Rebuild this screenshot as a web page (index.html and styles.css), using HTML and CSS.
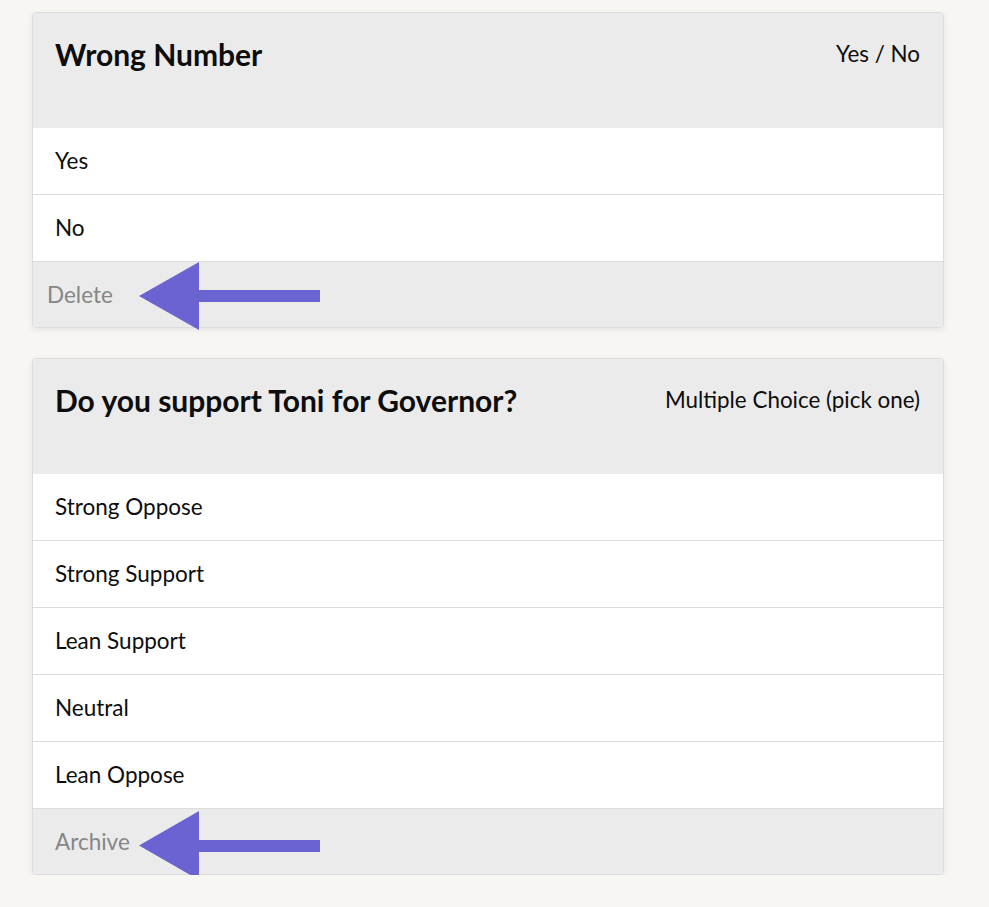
FILE: index.html
```html
<!DOCTYPE html>
<html lang="en">
<head>
<meta charset="utf-8">
<title>Questions</title>
<link rel="stylesheet" href="styles.css">
</head>
<body>
<main class="page">
  <section class="card">
    <header class="card-head">
      <h2 class="card-title">Wrong Number</h2>
      <span class="card-type">Yes / No</span>
    </header>
    <div class="row">Yes</div>
    <div class="row">No</div>
    <footer class="card-foot foot-delete">
      <span class="foot-action">Delete</span>
      <svg class="arrow arrow-1" width="181" height="68" viewBox="0 0 181 68"><polygon points="0,34 60,0 60,28 181,28 181,40 60,40 60,68" fill="#6b63d2"/></svg>
    </footer>
  </section>
  <section class="card">
    <header class="card-head">
      <h2 class="card-title">Do you support Toni for Governor?</h2>
      <span class="card-type">Multiple Choice (pick one)</span>
    </header>
    <div class="row">Strong Oppose</div>
    <div class="row">Strong Support</div>
    <div class="row">Lean Support</div>
    <div class="row">Neutral</div>
    <div class="row">Lean Oppose</div>
    <footer class="card-foot foot-archive">
      <span class="foot-action">Archive</span>
      <svg class="arrow arrow-2" width="181" height="69" viewBox="0 0 181 69"><polygon points="0,34.5 60,0 60,29 181,29 181,41 60,41 60,69" fill="#6b63d2"/></svg>
    </footer>
  </section>
</main>
</body>
</html>
```
FILE: styles.css
```css
* { box-sizing: border-box; }
html, body { margin: 0; padding: 0; }
body {
  background: #f7f6f3;
  font-family: "Lato", "Noto Sans", sans-serif;
  color: #0d0d0d;
}
.page {
  padding: 12px 0 0 32px;
  width: 944px;
  display: flex;
  flex-direction: column;
  gap: 30px;
}
.card {
  background: #fff;
  border: 1px solid #dcdcdc;
  border-radius: 4px;
  box-shadow: 0 2px 6px rgba(0,0,0,0.08);
}
.card-head {
  background: #ebebeb;
  border-radius: 4px 4px 0 0;
  min-height: 115px;
  padding: 23px 23px 0 22px;
  display: flex;
  justify-content: space-between;
  align-items: flex-start;
}
.card-title {
  margin: 0;
  font-size: 30px;
  line-height: 36px;
  font-weight: 700;
}
.card-type {
  font-size: 22.4px;
  line-height: 36px;
}
.row {
  font-size: 22.5px;
  line-height: 26px;
  padding: 20px 22px;
  border-top: 1px solid #dcdcdc;
}
.card-head + .row { border-top: 0; }
.card-foot {
  position: relative;
  background: #ebebeb;
  border-top: 1px solid #dcdcdc;
  border-radius: 0 0 4px 4px;
  height: 66px;
  display: flex;
  align-items: center;
  font-size: 22.5px;
}
.foot-delete { padding-left: 14px; }
.foot-archive { padding-left: 22px; }
.foot-action { color: #868686; }
.arrow { position: absolute; left: 106px; }
.arrow-1 { top: 0px; }
.arrow-2 { top: 2px; }
```
